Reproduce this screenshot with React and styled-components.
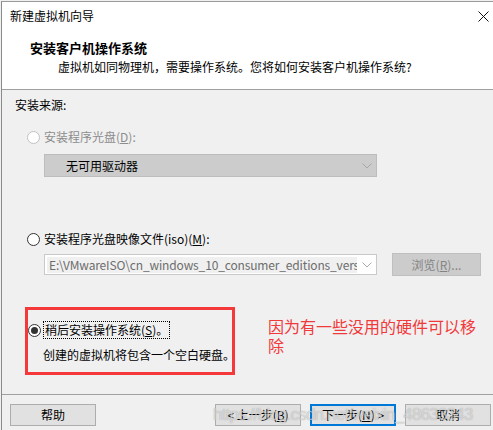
import React from "react";
import styled, { createGlobalStyle } from "styled-components";

const Global = createGlobalStyle`
  html, body { margin: 0; padding: 0; background: #f0f0f0; }
  body { font-family: "Noto Sans CJK SC", "Noto Sans", sans-serif; font-size: 12px; color: #000; }
  * { box-sizing: border-box; }
`;

const Window = styled.div`
  margin: 1px 0 0 1px;
  width: 492px;
  height: 429px;
  border-top: 1px solid #9a9a9a;
  border-left: 1px solid #8a8a8a;
  display: flex;
  flex-direction: column;
  background: #f0f0f0;
  overflow: hidden;
`;

const TitleBar = styled.div`
  height: 28px;
  background: #fff;
  display: flex;
  align-items: center;
  justify-content: space-between;
  padding: 0 3px 0 8px;
  font-size: 12px;
  line-height: 16px;
`;

const CloseBtn = styled.div`
  width: 14px;
  height: 14px;
  display: flex;
  align-items: center;
  justify-content: center;
`;

const Header = styled.div`
  height: 60px;
  background: #fff;
  border-bottom: 1px solid #a0a0a0;
  padding: 10px 0 0 28px;
`;

const Heading = styled.div`
  font-size: 13px;
  font-weight: bold;
  line-height: 16px;
`;

const SubHeading = styled.div`
  margin: 3px 0 0 28px;
  font-size: 12px;
  line-height: 16px;
`;

const Body = styled.div`
  flex: 1;
  padding: 7px 0 0 13px;
  display: flex;
  flex-direction: column;
`;

const Label = styled.div`
  line-height: 16px;
`;

const RadioRow = styled.div`
  display: flex;
  align-items: center;
  height: 16px;
  margin: ${(p) => p.$mt || 0}px 0 0 ${(p) => p.$ml ?? 12}px;
  color: ${(p) => (p.$disabled ? "#8d8d8d" : "#000")};
  gap: 2px;
`;

const RadioCircle = styled.span`
  width: 13px;
  height: 13px;
  border-radius: 50%;
  border: 1px solid ${(p) => (p.$disabled ? "#c2c2c2" : "#333")};
  background: #fff;
  display: flex;
  align-items: center;
  justify-content: center;
  flex-shrink: 0;
  &::after {
    content: "";
    display: ${(p) => (p.$checked ? "block" : "none")};
    width: 7px;
    height: 7px;
    border-radius: 50%;
    background: #333;
  }
`;

const RadioText = styled.span`
  line-height: 16px;
  white-space: nowrap;
  padding: 0 1px;
  border: 1px dotted ${(p) => (p.$focus ? "#000" : "transparent")};
`;

const U = styled.span`
  text-decoration: underline;
  text-underline-offset: 1px;
`;

const Select = styled.div`
  margin: 9px 0 0 29px;
  width: 333px;
  height: 23px;
  background: #cccccc;
  border: 1px solid #bdbdbd;
  display: flex;
  align-items: center;
  justify-content: space-between;
  padding: 0 4px 0 21px;
  line-height: 16px;
`;

const Chevron = () => (
  <svg width="10" height="6" viewBox="0 0 10 6">
    <path d="M0.5 0.5 L5 5 L9.5 0.5" fill="none" stroke="#a8a8a8" strokeWidth="1" />
  </svg>
);

const FileRow = styled.div`
  margin: 6px 0 0 29px;
  height: 23px;
  display: flex;
  align-items: center;
  gap: 15px;
`;

const Field = styled.div`
  width: 333px;
  height: 21px;
  background: #fff;
  border: 1px solid #c9c9c9;
  display: flex;
  align-items: center;
  padding: 0 4px 0 2px;
  gap: 5px;
`;

const FieldText = styled.div`
  width: 311px;
  overflow: hidden;
  white-space: nowrap;
  background: #f0f0f0;
  color: #6d6d6d;
  padding-left: 2px;
  line-height: 16px;
  font-family: "Noto Sans CJK SC", "Noto Sans", sans-serif;
  font-size: 12px;
  letter-spacing: -0.15px;
`;

const FlatButton = styled.div`
  width: 89px;
  height: 23px;
  background: #cccccc;
  border: 1px solid #bfbfbf;
  color: #838383;
  display: flex;
  align-items: center;
  justify-content: center;
  line-height: 16px;
`;

const AnnotatedRow = styled.div`
  margin-top: 31px;
  display: flex;
  align-items: flex-start;
`;

const RedBox = styled.div`
  margin-left: 10px;
  width: 210px;
  height: 68px;
  border: 3px solid #f5383a;
  padding-top: 12px;
  display: flex;
  flex-direction: column;
`;

const Desc = styled.div`
  margin: 9px 0 0 15px;
  line-height: 16px;
  white-space: nowrap;
`;

const Note = styled.div`
  margin: 10px 0 0 33px;
  width: 216px;
  color: #f0393b;
  font-size: 16px;
  line-height: 19px;
`;

const Footer = styled.div`
  position: relative;
  height: 36px;
  border-top: 1px solid #a0a0a0;
  padding: 9px 2px 0 8px;
  display: flex;
  align-items: flex-start;
`;

const ButtonGroup = styled.div`
  margin-left: auto;
  display: flex;
  gap: 9px;
`;

const Button = styled.div`
  width: 86px;
  height: 22px;
  background: #e1e1e1;
  border: ${(p) => (p.$default ? "2px solid #0078d7" : "1px solid #adadad")};
  display: flex;
  align-items: center;
  justify-content: center;
  line-height: 16px;
  white-space: nowrap;
`;

const Watermark = styled.div`
  position: absolute;
  left: 211px;
  top: 9px;
  font-family: "Liberation Sans", Arial, sans-serif;
  font-size: 17px;
  letter-spacing: -0.8px;
  line-height: 22px;
  color: rgba(255, 255, 255, 0.55);
  text-shadow: 0 0 1px rgba(90, 90, 90, 0.55);
  pointer-events: none;
  white-space: nowrap;
`;

export default function App() {
  return (
    <>
      <Global />
      <Window>
        <TitleBar>
          <span>新建虚拟机向导</span>
          <CloseBtn>
            <svg width="11" height="11" viewBox="0 0 11 11">
              <path d="M0.5 0.5 L10.5 10.5 M10.5 0.5 L0.5 10.5" stroke="#111" strokeWidth="1" />
            </svg>
          </CloseBtn>
        </TitleBar>
        <Header>
          <Heading>安装客户机操作系统</Heading>
          <SubHeading>虚拟机如同物理机，需要操作系统。您将如何安装客户机操作系统?</SubHeading>
        </Header>
        <Body>
          <Label>安装来源:</Label>
          <RadioRow $mt={16} $disabled>
            <RadioCircle $disabled />
            <RadioText>
              安装程序光盘(<U>D</U>):
            </RadioText>
          </RadioRow>
          <Select>
            <span>无可用驱动器</span>
            <Chevron />
          </Select>
          <RadioRow $mt={54}>
            <RadioCircle />
            <RadioText>
              安装程序光盘映像文件(iso)(<U>M</U>):
            </RadioText>
          </RadioRow>
          <FileRow>
            <Field>
              <FieldText>E:\VMwareISO\cn_windows_10_consumer_editions_version_1909</FieldText>
              <Chevron />
            </Field>
            <FlatButton>
              浏览(<U>R</U>)...
            </FlatButton>
          </FileRow>
          <AnnotatedRow>
            <RedBox>
              <RadioRow $ml={0}>
                <RadioCircle $checked />
                <RadioText $focus>
                  稍后安装操作系统(<U>S</U>)。
                </RadioText>
              </RadioRow>
              <Desc>创建的虚拟机将包含一个空白硬盘。</Desc>
            </RedBox>
            <Note>因为有一些没用的硬件可以移除</Note>
          </AnnotatedRow>
        </Body>
        <Footer>
          <Button>帮助</Button>
          <ButtonGroup>
            <Button>
              &lt; 上一步(<U>B</U>)
            </Button>
            <Button $default>
              下一步(<U>N</U>) &gt;
            </Button>
            <Button>取消</Button>
          </ButtonGroup>
          <Watermark>https://blog.csdn.net/weixin_48633343</Watermark>
        </Footer>
      </Window>
    </>
  );
}
